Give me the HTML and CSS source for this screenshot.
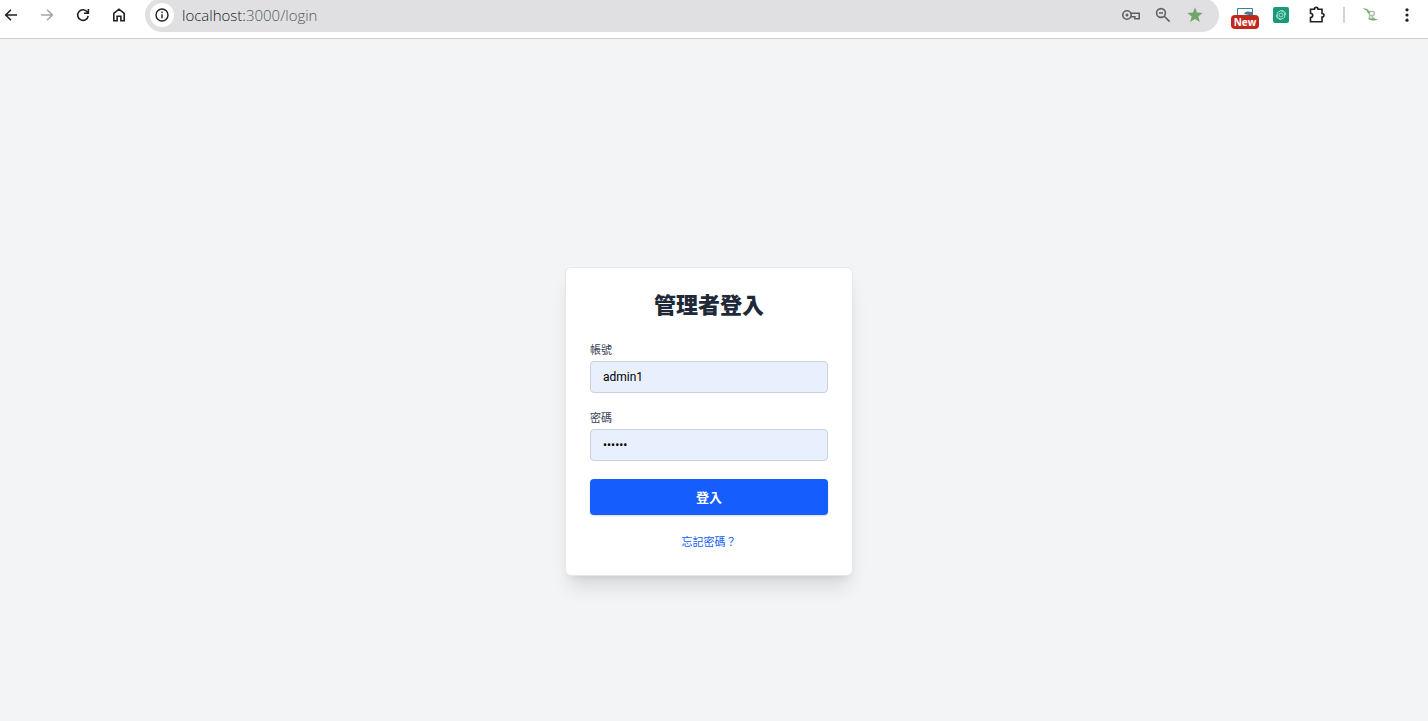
FILE: index.html
```html
<!DOCTYPE html>
<html lang="zh-Hant">
<head>
  <meta charset="UTF-8" />
  <meta name="viewport" content="width=device-width, initial-scale=1.0"/>
  <title>管理者登入</title>
  <link rel="stylesheet" href="styles.css">
</head>
<body>

  <header class="toolbar">
    <nav class="nav-buttons">
      <button type="button" aria-label="Back">
        <svg width="16" height="16" viewBox="0 0 16 16"><path d="M14 8H3M8 2.7 2.7 8 8 13.3"/></svg>
      </button>
      <button type="button" class="muted" aria-label="Forward">
        <svg width="16" height="16" viewBox="0 0 16 16"><path d="M2 8h11M8 2.7 13.3 8 8 13.3"/></svg>
      </button>
      <button type="button" aria-label="Reload">
        <svg width="16" height="16" viewBox="0 0 16 16"><path d="M13.2 8.8A5.3 5.3 0 1 1 12.3 5L13.4 6.2M13.4 2v4.3H9"/></svg>
      </button>
      <button type="button" aria-label="Home">
        <svg width="16" height="16" viewBox="0 0 16 16"><path d="M2.8 6.3 8 2.2l5.2 4.1v7.5H9.9V9.2H6.1v4.6H2.8z"/></svg>
      </button>
    </nav>

    <div class="address-bar">
      <button type="button" class="site-info" aria-label="Site information">
        <svg width="16" height="16" viewBox="0 0 16 16"><circle cx="8" cy="8" r="6"/><path d="M8 7.2v4M8 4.6v1.5"/></svg>
      </button>
      <span class="url">localhost:<span>3000/login</span></span>
      <div class="address-actions">
        <button type="button" aria-label="Passwords">
          <svg width="20" height="16" viewBox="0 0 20 16"><circle cx="6" cy="8" r="4.2"/><circle class="dot" cx="6" cy="8" r="1.5"/><path d="M9.8 6.3h8.4v5.4h-4.3v-2H9.8"/></svg>
        </button>
        <button type="button" aria-label="Zoom">
          <svg width="16" height="16" viewBox="0 0 16 16"><circle cx="6" cy="6" r="4.4"/><path d="M9.3 9.3 14.6 14.6M4 6h4"/></svg>
        </button>
        <button type="button" class="star" aria-label="Bookmark">
          <svg width="18" height="18" viewBox="0 0 18 18"><path d="m9 1.3 2 5.2 5.7.4-4.4 3.6 1.5 5.5L9 13l-4.8 3 1.5-5.5L1.3 6.9 7 6.5z"/></svg>
        </button>
      </div>
    </div>

    <div class="extensions">
      <button type="button" class="ext-new" aria-label="New extension">
        <svg width="18" height="16" viewBox="0 0 18 16"><path d="M1.5 9V1.5h15V9"/><path class="fill" d="M8 7c1-3 4-3 8-2v3H13z"/></svg>
        <span class="badge">New</span>
      </button>
      <button type="button" class="ext-green" aria-label="Assistant">
        <svg width="16" height="16" viewBox="0 0 16 16"><rect width="16" height="16" rx="2"/><path d="m8 3.5 3.7 2.2v4.5L8 12.4l-3.7-2.2V5.7z"/><circle cx="8" cy="8" r="2"/><path d="M8 3.5c3 0 5 2 4.5 4.5M8 12.4c-3 0-5-2-4.5-4.4"/></svg>
      </button>
      <button type="button" aria-label="Extensions">
        <svg width="20" height="20" viewBox="0 0 20 20"><path d="M3.5 4.2h3.9c0-2.5 3.6-2.5 3.600 0h4v4.3c2.6 0 2.6 3.5 0 3.500v4.7H3.500v-4.200c3-.5 3-3.700 0-4.200z"/></svg>
      </button>
      <span class="divider"></span>
      <button type="button" class="ext-leaf" aria-label="Profile">
        <svg width="18" height="16" viewBox="0 0 18 16"><path d="M7 4.500h3.500c2.500 0 2.500 4 0 4H9l3.500 4M7.500 5v7.500"/><path class="leaf" d="M1 1.500C4 1 7.500 2 8 7 6 6.500 5 5 4.500 3.500 3.500 3 2 2.500 1 1.500zM6 11.500c3-.5 6 0 10 1-3 1.500-7 1.500-10-1z"/></svg>
      </button>
      <button type="button" class="menu" aria-label="Menu">
        <svg width="16" height="16" viewBox="0 0 16 16"><circle cx="8" cy="2.8" r="1.6"/><circle cx="8" cy="8" r="1.6"/><circle cx="8" cy="13.2" r="1.6"/></svg>
      </button>
    </div>
  </header>

  <main class="main">
    <form class="login-card">
      <h1>管理者登入</h1>

      <div class="field">
        <label for="account">帳號</label>
        <input type="text" id="account" value="admin1" />
      </div>

      <div class="field">
        <label for="password">密碼</label>
        <input type="password" id="password" value="123456" />
      </div>

      <button type="submit" class="login-btn">登入</button>
      <a href="#" class="forgot">忘記密碼？</a>
    </form>
  </main>

</body>
</html>
```
FILE: styles.css
```css
* {
  margin: 0;
  padding: 0;
  box-sizing: border-box;
}

body {
  font-family: Roboto, 'Noto Sans CJK TC', sans-serif;
  background: #f3f4f6;
  display: flex;
  flex-direction: column;
  min-height: 100vh;
}

button {
  border: none;
  background: none;
  font-family: inherit;
  cursor: pointer;
}

svg {
  display: block;
  fill: none;
  stroke: currentColor;
  stroke-width: 1.6;
}

/* browser toolbar */
.toolbar {
  height: 39px;
  padding: 0 7px 8px 0;
  display: flex;
  align-items: center;
  background: #fff;
  border-bottom: 1px solid #cfcfd1;
  overflow: hidden;
  color: #202124;
}

.toolbar button {
  display: flex;
  align-items: center;
  justify-content: center;
  color: inherit;
}

.nav-buttons {
  display: flex;
  gap: 14px;
  margin-right: 15px;
}

.nav-buttons button {
  width: 22px;
  height: 22px;
}

.toolbar .muted {
  color: #a5a5a7;
}

.address-bar {
  flex: 1;
  height: 34px;
  padding: 0 14px 0 5px;
  display: flex;
  align-items: center;
  gap: 8px;
  background: #e0e0e2;
  border-radius: 17px;
}

.address-bar .site-info {
  width: 24px;
  height: 24px;
  border-radius: 50%;
  background: #fff;
}

.site-info svg {
  stroke-width: 1.4;
}

.url {
  flex: 1;
  font-family: 'Open Sans', sans-serif;
  font-size: 15px;
  font-weight: 300;
  line-height: 20px;
  color: #202124;
}

.url span {
  color: #56575a;
}

.address-actions {
  display: flex;
  gap: 12px;
  color: #5f6062;
}

.address-actions button {
  width: 20px;
  height: 20px;
}

.dot,
.menu svg {
  fill: currentColor;
  stroke: none;
}

.address-actions .star {
  color: #74a46d;
}

.star svg {
  fill: currentColor;
  stroke: none;
}

.extensions {
  display: flex;
  align-items: center;
  gap: 8px;
  margin-left: 12px;
}

.extensions button {
  width: 28px;
  height: 28px;
}

.toolbar .ext-new {
  position: relative;
  color: #397fa0;
}

.ext-new svg {
  stroke-width: 1;
}

.ext-new .fill {
  fill: currentColor;
  stroke: none;
}

.badge {
  position: absolute;
  left: 0;
  bottom: 0;
  width: 28px;
  border-radius: 4px;
  background: #c4271c;
  color: #fff;
  font-family: 'Open Sans', sans-serif;
  font-size: 10px;
  font-weight: 700;
  line-height: 14px;
  text-align: center;
}

.ext-green svg {
  stroke: #a9ddca;
  stroke-width: 1;
}

.ext-green rect {
  fill: #169b78;
  stroke: none;
}

.divider {
  width: 2px;
  height: 16px;
  margin: 0 4px;
  background: #ccd8c8;
}

.ext-leaf svg {
  stroke: #b3bab2;
  stroke-width: 1.4;
}

.ext-leaf .leaf {
  fill: #6bb35f;
  stroke: none;
}

/* login page */
.main {
  flex: 1;
  display: flex;
  justify-content: center;
  align-items: flex-start;
  padding: 228px 10px 24px 0;
}

.login-card {
  width: 288px;
  padding: 24px 24px 22px;
  background: #fff;
  border: 1px solid #e5e7eb;
  border-radius: 6px;
  box-shadow: 0 15px 19px -4px rgba(0, 0, 0, 0.1), 0 6px 8px -5px rgba(0, 0, 0, 0.1);
}

.login-card h1 {
  margin-bottom: 23px;
  font-size: 22px;
  font-weight: 800;
  line-height: 28px;
  text-align: center;
  color: #1e2939;
}

.field {
  margin-bottom: 18px;
}

.field label {
  display: block;
  margin-bottom: 2px;
  font-size: 11px;
  line-height: 16px;
  color: #364153;
}

.field input {
  display: block;
  width: 100%;
  height: 32px;
  padding: 0 12px;
  border: 1px solid #cbd0dc;
  border-radius: 4px;
  background: #e8f0fe;
  font-family: inherit;
  font-size: 12px;
  color: #000;
}

.login-btn {
  display: block;
  width: 100%;
  height: 36px;
  padding-bottom: 2px;
  margin-bottom: 18px;
  border-radius: 4px;
  background: #155dfc;
  box-shadow: 0 1px 2px rgba(0, 0, 0, 0.15);
  color: #fff;
  font-size: 13px;
  font-weight: 700;
}

.login-btn:hover {
  background: #1447e6;
}

.forgot {
  display: block;
  font-size: 11px;
  line-height: 20px;
  text-align: center;
  text-decoration: none;
  color: #155dfc;
}

.forgot:hover {
  text-decoration: underline;
}
```
